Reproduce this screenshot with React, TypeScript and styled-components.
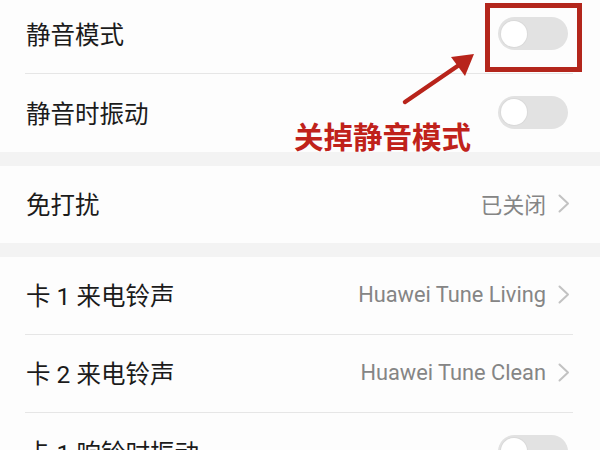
import React from "react";
import styled, { createGlobalStyle } from "styled-components";

const Global = createGlobalStyle`
  html, body { margin: 0; padding: 0; background: #f3f3f3; }
  body { font-family: Roboto, "Noto Sans CJK SC", sans-serif; }
`;

const Page = styled.div`
  position: relative;
  width: 600px;
  height: 450px;
  overflow: hidden;
  background: #f3f3f3;
  display: flex;
  flex-direction: column;
  gap: 14px;
`;

const Section = styled.div<{ $offset?: number }>`
  background: #fdfdfd;
  margin-top: ${(p) => p.$offset ?? 0}px;
  display: flex;
  flex-direction: column;
`;

const Row = styled.div`
  padding-left: 25px;
  padding-right: 27px;
  background: #fdfdfd;
  &:not(:last-child) > div {
    border-bottom: 1px solid #e6e6e6;
  }
`;

const RowInner = styled.div<{ $h: number }>`
  height: ${(p) => p.$h}px;
  display: flex;
  align-items: center;
  justify-content: space-between;
  padding-left: 1px;
  padding-right: 3px;
  padding-bottom: 2px;
  box-sizing: border-box;
`;

const Title = styled.span`
  font-size: 24.5px;
  color: #1b1b1b;
  white-space: nowrap;
`;

const Right = styled.div`
  display: flex;
  align-items: center;
  gap: 12px;
`;

const Value = styled.span`
  font-size: 21.8px;
  color: #858585;
  white-space: nowrap;
`;

const Track = styled.div`
  width: 70px;
  height: 33px;
  border-radius: 17px;
  background: #e2e2e2;
  display: flex;
  align-items: center;
  padding-left: 3px;
  box-sizing: border-box;
  margin-right: 2px;
`;

const Knob = styled.div`
  width: 26px;
  height: 26px;
  border-radius: 50%;
  background: #ffffff;
  box-shadow: 0 0 0 1px #dadada;
`;

const Chevron = () => (
  <svg width="12" height="19" viewBox="0 0 12 19" fill="none">
    <path d="M1.5 1.5 L10 9.5 L1.5 17.5" stroke="#c2c2c2" strokeWidth="2" strokeLinecap="round" strokeLinejoin="round" />
  </svg>
);

const Toggle = () => (
  <Track>
    <Knob />
  </Track>
);

const HighlightBox = styled.div`
  position: absolute;
  left: 485px;
  top: 3px;
  width: 97px;
  height: 69px;
  box-sizing: border-box;
  border: 5px solid #b3261c;
`;

const Callout = styled.span`
  position: absolute;
  left: 294px;
  top: 120px;
  font-size: 29.5px;
  line-height: 30px;
  font-weight: 700;
  color: #c0221b;
  white-space: nowrap;
  font-family: "Noto Sans CJK SC", sans-serif;
`;

const ArrowSvg = styled.svg`
  position: absolute;
  left: 0;
  top: 0;
`;

type Item =
  | { title: string; kind: "toggle" }
  | { title: string; kind: "link"; value: string };

const RowItem = ({ item, h }: { item: Item; h: number }) => (
  <Row>
    <RowInner $h={h}>
      <Title>{item.title}</Title>
      {item.kind === "toggle" ? (
        <Toggle />
      ) : (
        <Right>
          <Value>{item.value}</Value>
          <Chevron />
        </Right>
      )}
    </RowInner>
  </Row>
);

const sections: { offset?: number; h: number; items: Item[] }[] = [
  {
    offset: -4,
    h: 78,
    items: [
      { title: "静音模式", kind: "toggle" },
      { title: "静音时振动", kind: "toggle" },
    ],
  },
  { h: 77, items: [{ title: "免打扰", kind: "link", value: "已关闭" }] },
  {
    h: 78,
    items: [
      { title: "卡 1 来电铃声", kind: "link", value: "Huawei Tune Living" },
      { title: "卡 2 来电铃声", kind: "link", value: "Huawei Tune Clean" },
      { title: "卡 1 响铃时振动", kind: "toggle" },
    ],
  },
];

export default function App() {
  return (
    <>
      <Global />
      <Page>
        {sections.map((s, i) => (
          <Section key={i} $offset={s.offset}>
            {s.items.map((it, j) => (
              <RowItem key={j} item={it} h={s.h} />
            ))}
          </Section>
        ))}
        <HighlightBox />
        <ArrowSvg width="600" height="450" viewBox="0 0 600 450">
          <line x1="405" y1="102" x2="462" y2="63" stroke="#b8241b" strokeWidth="4.5" strokeLinecap="round" />
          <polygon points="474,54 451,57 465,76" fill="#b8241b" />
        </ArrowSvg>
        <Callout>关掉静音模式</Callout>
      </Page>
    </>
  );
}
